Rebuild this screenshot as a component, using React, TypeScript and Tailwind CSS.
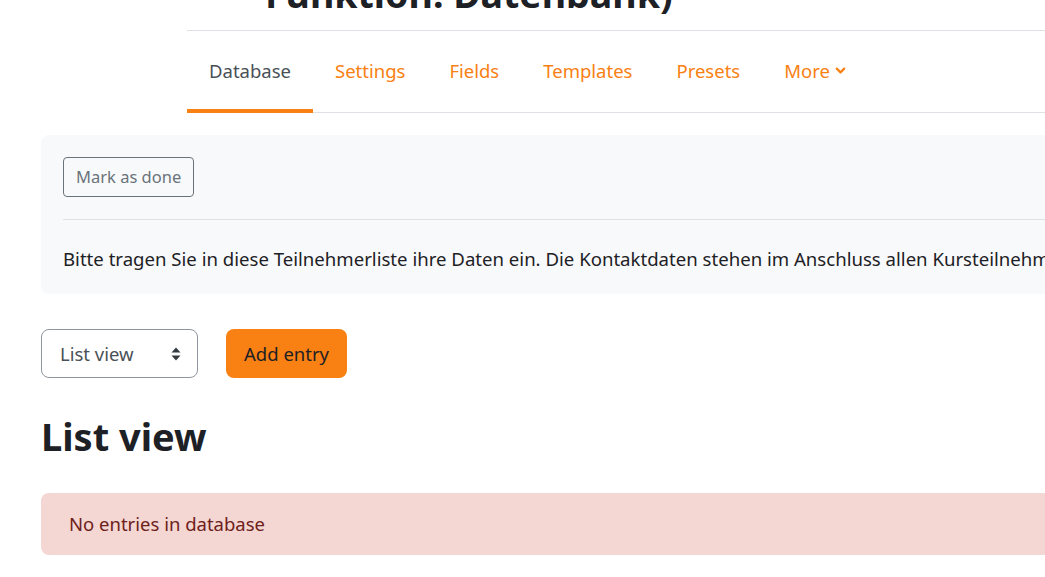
import { ChevronDown } from 'lucide-react';

const tabs = ["Database", "Settings", "Fields", "Templates", "Presets"];

function SelectArrows() {
  return (
    <svg width="10" height="14" viewBox="0 0 10 14" className="text-[#343a40]">
      <path d="M5 0.5 L9.5 5.5 H0.5 Z" fill="currentColor" />
      <path d="M5 13.5 L9.5 8.5 H0.5 Z" fill="currentColor" />
    </svg>
  );
}

export default function App() {
  return (
    <div className="w-[1045px] h-[577px] overflow-hidden bg-white text-[#1d2125]" style={{ fontFamily: '"Noto Sans", sans-serif' }}>
      <div className="w-[1400px]">
        {/* Page header + secondary navigation */}
        <div className="ml-[187px]">
          <div className="h-[31px] border-b border-[#dee2e6] overflow-hidden">
            <h1 className="ml-[78px] -mt-[29px] text-[37.5px] leading-[45px] font-bold whitespace-nowrap">
              Funktion: Datenbank)
            </h1>
          </div>
          <nav className="flex border-b border-[#dee2e6] h-[82px] text-[18.5px]">
            {tabs.map((t, i) => (
              <div
                key={t}
                className={
                  i === 0
                    ? "flex items-center px-[22px] pt-[3px] pb-[2px] border-b-[4px] border-[#f98012] text-[#495057] -mb-px"
                    : "flex items-center px-[22px] pb-[2px] text-[#f98012]"
                }
              >
                {t}
              </div>
            ))}
            <div className="flex items-center px-[22px] pb-[2px] text-[#f98012] gap-[3px]">
              More
              <ChevronDown size={15} strokeWidth={3.5} />
            </div>
          </nav>
        </div>

        <div className="px-[41px]">
          {/* Activity information */}
          <div className="mt-[22px] bg-[#f8f9fa] rounded-[8px] px-[22px] pt-[22px] pb-[21px]">
            <button className="h-[40px] px-[12px] border border-[#6a737b] rounded-[4px] text-[16.5px] text-[#6a737b]">
              Mark as done
            </button>
            <div className="mt-[22px] border-t border-[#dee2e6]" />
            <p className="mt-[25px] text-[18.6px] leading-[28px] whitespace-nowrap">
              Bitte tragen Sie in diese Teilnehmerliste ihre Daten ein. Die Kontaktdaten stehen im Anschluss allen Kursteilnehmern zur Verfügung.
            </p>
          </div>

          {/* Controls */}
          <div className="mt-[35px] flex items-center gap-[28px]">
            <div className="w-[157px] h-[49px] border border-[#8f959e] rounded-[8px] flex items-center justify-between pl-[18px] pr-[16px] text-[18.5px] text-[#495057]">
              List view
              <SelectArrows />
            </div>
            <button className="h-[49px] px-[18px] bg-[#f98012] rounded-[8px] text-[18.5px] text-[#1d2125]">
              Add entry
            </button>
          </div>

          <h2 className="mt-[34px] text-[38px] leading-[48px] font-bold">List view</h2>

          <div className="mt-[33px] h-[62px] bg-[#f4d6d2] rounded-[8px] flex items-center px-[28px] text-[18.5px] text-[#6e211a]">
            No entries in database
          </div>
        </div>
      </div>
    </div>
  );
}
